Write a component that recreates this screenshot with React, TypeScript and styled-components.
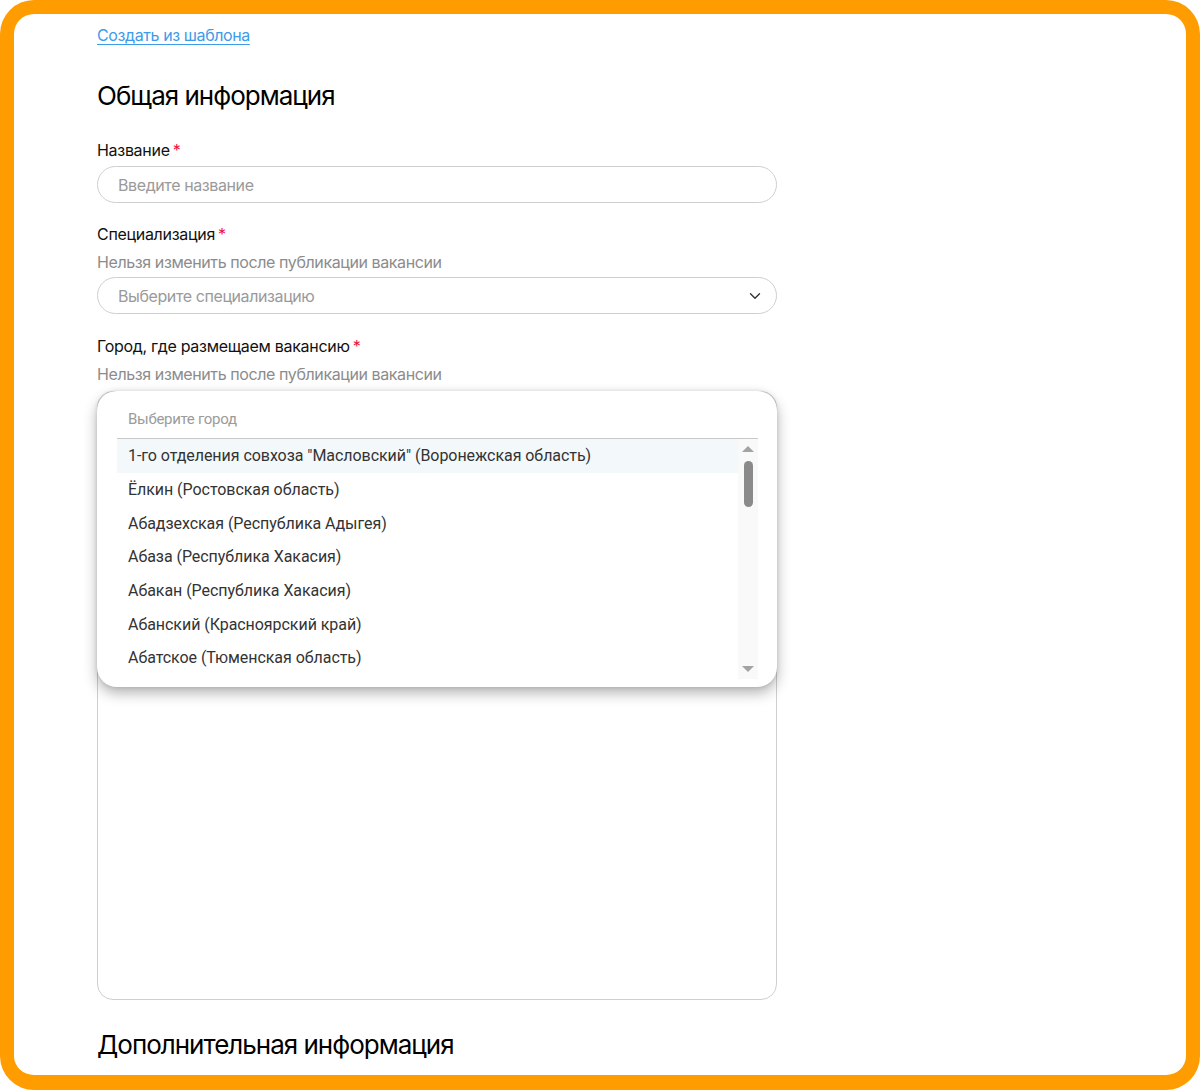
import React from 'react';
import styled, { createGlobalStyle } from 'styled-components';
import { ChevronDown } from 'lucide-react';

const GlobalStyle = createGlobalStyle`
  html, body {
    margin: 0;
    padding: 0;
    background: #ffffff;
  }
  body {
    font-family: Inter, "Noto Sans", sans-serif;
    color: #111;
  }
`;

const Frame = styled.div`
  box-sizing: border-box;
  width: 1200px;
  height: 1090px;
  border: 14px solid #ff9c00;
  border-bottom-width: 15px;
  border-radius: 34px;
  overflow: hidden;
  background: #fff;
`;

const Content = styled.div`
  width: 680px;
  padding: 11px 0 0 83px;
  display: flex;
  flex-direction: column;
`;

const TemplateLink = styled.a`
  align-self: flex-start;
  font-size: 16px;
  line-height: 20px;
  color: #3d9be9;
  letter-spacing: -0.4px;
  text-decoration: underline;
  text-underline-offset: 3px;
  text-decoration-thickness: 1px;
  cursor: pointer;
`;

const SectionTitle = styled.h2<{ $top: number }>`
  margin: ${p => p.$top}px 0 0;
  font-size: 26px;
  line-height: 32px;
  font-weight: 400;
  color: #000;
  letter-spacing: -1px;
`;

const Field = styled.div<{ $top: number }>`
  display: flex;
  flex-direction: column;
  margin-top: ${p => p.$top}px;
`;

const Label = styled.label`
  font-size: 16px;
  line-height: 20px;
  color: #111;
  letter-spacing: -0.3px;
`;

const Required = styled.span`
  color: #ee1144;
  margin-left: 3px;
`;

const Hint = styled.div`
  margin-top: 8px;
  font-size: 16px;
  line-height: 20px;
  color: #8c8c8c;
  letter-spacing: -0.4px;
`;

const Input = styled.div<{ $top: number }>`
  box-sizing: border-box;
  margin-top: ${p => p.$top}px;
  height: 37px;
  border: 1px solid #cfcfcf;
  border-radius: 19px;
  display: flex;
  align-items: center;
  justify-content: space-between;
  padding: 0 12px 0 20px;
  font-size: 16px;
  color: #9a9a9a;
  letter-spacing: -0.4px;
`;

const SelectArea = styled.div`
  position: relative;
  margin-top: 7px;
`;

const TextBox = styled.div`
  box-sizing: border-box;
  height: 609px;
  border: 1px solid #cfcfcf;
  border-radius: 16px;
`;

const Dropdown = styled.div`
  position: absolute;
  top: 0;
  left: 0;
  right: 0;
  height: 296px;
  background: #fff;
  border-radius: 20px;
  box-shadow: 0 6px 14px rgba(0, 0, 0, 0.3), 0 0 4px rgba(0, 0, 0, 0.12);
  padding: 0 19px 0 20px;
  box-sizing: border-box;
  font-family: Roboto, "Noto Sans", sans-serif;
`;

const Search = styled.div`
  height: 48px;
  box-sizing: border-box;
  padding: 19px 0 0 11px;
  font-size: 15px;
  line-height: 18px;
  color: #9b9b9b;
  letter-spacing: -0.3px;
  border-bottom: 1px solid #c8c8c8;
`;

const ListWrap = styled.div`
  display: flex;
  height: 240px;
`;

const Options = styled.ul`
  flex: 1;
  margin: 0;
  padding: 0;
  list-style: none;
  overflow: hidden;
`;

const Option = styled.li<{ $active?: boolean }>`
  height: 33.7px;
  display: flex;
  align-items: center;
  padding-left: 11px;
  font-size: 16px;
  color: #333;
  letter-spacing: -0.05px;
  background: ${p => (p.$active ? '#f3f8fb' : 'transparent')};
`;

const ScrollTrack = styled.div`
  width: 20px;
  background: #f9f9f9;
  display: flex;
  flex-direction: column;
  align-items: center;
`;

const Arrow = styled.div<{ $down?: boolean }>`
  width: 0;
  height: 0;
  margin-top: ${p => (p.$down ? 'auto' : '7px')};
  margin-bottom: ${p => (p.$down ? '7px' : '0')};
  border-left: 6px solid transparent;
  border-right: 6px solid transparent;
  ${p =>
    p.$down
      ? 'border-top: 6px solid #a3a3a3;'
      : 'border-bottom: 6px solid #a3a3a3;'}
`;

const Thumb = styled.div`
  margin-top: 9px;
  width: 9px;
  height: 46px;
  border-radius: 5px;
  background: #8a8a8a;
`;

const cities = [
  '1-го отделения совхоза "Масловский" (Воронежская область)',
  'Ёлкин (Ростовская область)',
  'Абадзехская (Республика Адыгея)',
  'Абаза (Республика Хакасия)',
  'Абакан (Республика Хакасия)',
  'Абанский (Красноярский край)',
  'Абатское (Тюменская область)',
];

export default function App() {
  return (
    <>
      <GlobalStyle />
      <Frame>
        <Content>
          <TemplateLink>Создать из шаблона</TemplateLink>
          <SectionTitle $top={35}>Общая информация</SectionTitle>

          <Field $top={28}>
            <Label>
              Название<Required>*</Required>
            </Label>
            <Input $top={6}>Введите название</Input>
          </Field>

          <Field $top={21}>
            <Label>
              Специализация<Required>*</Required>
            </Label>
            <Hint>Нельзя изменить после публикации вакансии</Hint>
            <Input $top={5}>
              Выберите специализацию
              <ChevronDown size={18} color="#333" strokeWidth={1.8} />
            </Input>
          </Field>

          <Field $top={22}>
            <Label>
              Город, где размещаем вакансию<Required>*</Required>
            </Label>
            <Hint>Нельзя изменить после публикации вакансии</Hint>
            <SelectArea>
              <TextBox />
              <Dropdown>
                <Search>Выберите город</Search>
                <ListWrap>
                  <Options>
                    {cities.map((c, i) => (
                      <Option key={c} $active={i === 0}>
                        {c}
                      </Option>
                    ))}
                  </Options>
                  <ScrollTrack>
                    <Arrow />
                    <Thumb />
                    <Arrow $down />
                  </ScrollTrack>
                </ListWrap>
              </Dropdown>
            </SelectArea>
          </Field>

          <SectionTitle $top={29}>Дополнительная информация</SectionTitle>
        </Content>
      </Frame>
    </>
  );
}
